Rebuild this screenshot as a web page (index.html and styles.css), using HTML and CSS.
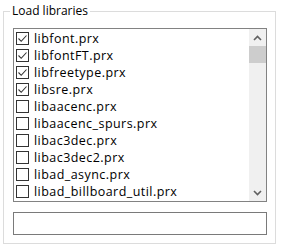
FILE: index.html
```html
<!DOCTYPE html>
<html lang="en">
<head>
    <meta charset="UTF-8">
    <title>Load libraries</title>
    <link rel="stylesheet" href="styles.css">
</head>
<body>
    <fieldset class="group">
        <legend class="group-title">Load libraries</legend>

        <!-- checked list of modules -->
        <div class="listbox">
            <div class="list-items">
                <label class="item"><span class="check on"><svg width="11" height="11" viewBox="0 0 11 11"><path d="M1.5 5.5 L4.2 8.3 L9.5 2.5" fill="none" stroke="#333" stroke-width="1.1"/></svg></span>libfont.prx</label>
                <label class="item"><span class="check on"><svg width="11" height="11" viewBox="0 0 11 11"><path d="M1.5 5.5 L4.2 8.3 L9.5 2.5" fill="none" stroke="#333" stroke-width="1.1"/></svg></span>libfontFT.prx</label>
                <label class="item"><span class="check on"><svg width="11" height="11" viewBox="0 0 11 11"><path d="M1.5 5.5 L4.2 8.3 L9.5 2.5" fill="none" stroke="#333" stroke-width="1.1"/></svg></span>libfreetype.prx</label>
                <label class="item"><span class="check on"><svg width="11" height="11" viewBox="0 0 11 11"><path d="M1.5 5.5 L4.2 8.3 L9.5 2.5" fill="none" stroke="#333" stroke-width="1.1"/></svg></span>libsre.prx</label>
                <label class="item"><span class="check"></span>libaacenc.prx</label>
                <label class="item"><span class="check"></span>libaacenc_spurs.prx</label>
                <label class="item"><span class="check"></span>libac3dec.prx</label>
                <label class="item"><span class="check"></span>libac3dec2.prx</label>
                <label class="item"><span class="check"></span>libad_async.prx</label>
                <label class="item"><span class="check"></span>libad_billboard_util.prx</label>
            </div>
            <div class="scrollbar">
                <div class="scroll-btn">
                    <svg width="9" height="6" viewBox="0 0 9 6"><path d="M1 5 L4.5 1.5 L8 5" fill="none" stroke="#606060" stroke-width="1.6"/></svg>
                </div>
                <div class="scroll-thumb"></div>
                <div class="scroll-track"></div>
                <div class="scroll-btn">
                    <svg width="9" height="6" viewBox="0 0 9 6"><path d="M1 1 L4.5 4.5 L8 1" fill="none" stroke="#606060" stroke-width="1.6"/></svg>
                </div>
            </div>
        </div>

        <div class="textbox"></div>
    </fieldset>
</body>
</html>
```

FILE: styles.css
```css
* {
    box-sizing: border-box;
}

body {
    margin: 0;
    padding: 3px 0 0 3px;
    background: #ffffff;
    font-family: 'Segoe UI', 'Open Sans', 'Noto Sans', sans-serif;
    font-size: 12px;
    color: #000;
}

/* group box */
.group {
    width: 273px;
    margin: 0;
    padding: 9px 8px 8px 9px;
    border: 1px solid #dcdcdc;
}

.group-title {
    margin-left: -3px;
    padding: 0 2px;
    line-height: 16px;
    height: 16px;
}

.listbox {
    display: flex;
    width: 254px;
    height: 174px;
    border: 1px solid #828282;
    overflow: hidden;
}

.list-items {
    flex: 1;
    display: flex;
    flex-direction: column;
    padding-top: 1px;
    font-size: 12.5px;
    line-height: 17px;
    letter-spacing: 0.45px;
}

.item {
    display: flex;
    align-items: center;
    height: 17px;
    padding-left: 2px;
    white-space: nowrap;
}

.check {
    width: 13px;
    height: 13px;
    border: 1px solid #333;
    margin-right: 5px;
    flex-shrink: 0;
    display: flex;
}

.scrollbar {
    width: 17px;
    display: flex;
    flex-direction: column;
    background: #f0f0f0;
}

.scroll-btn {
    height: 17px;
    display: flex;
    align-items: center;
    justify-content: center;
}

.scroll-thumb {
    height: 17px;
    background: #cdcdcd;
}

.scroll-track {
    flex: 1;
}

.textbox {
    width: 254px;
    height: 23px;
    margin-top: 10px;
    border: 1px solid #7a7a7a;
}
```
